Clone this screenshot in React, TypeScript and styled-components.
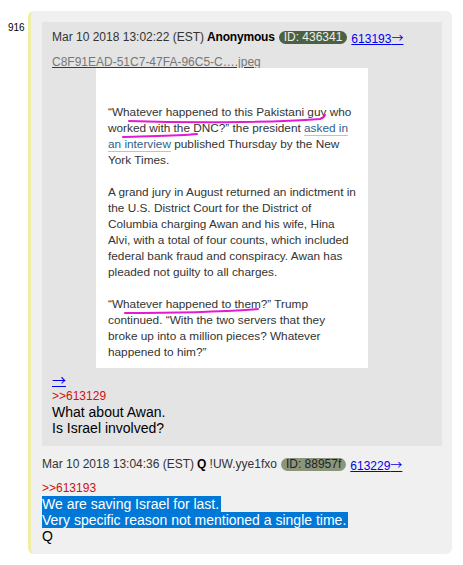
import * as React from 'react';
import styled, { createGlobalStyle } from 'styled-components';

const GlobalStyle = createGlobalStyle`
  body {
    margin: 0;
    background: #fff;
    font-family: "Liberation Sans", Arial, sans-serif;
  }
`;

const Page = styled.div`
  display: flex;
  align-items: flex-start;
  padding: 11px 11px 12px 8px;
`;

const PostNum = styled.div`
  width: 20px;
  font-size: 10px;
  line-height: 12px;
  padding-top: 11px;
  color: #000;
`;

const Card = styled.div`
  width: 424px;
  box-sizing: border-box;
  background: #f0f0f0;
  border-left: 3px solid #efefa4;
  border-radius: 6px;
  padding: 11px 10px 10px 11px;
`;

const QuotedPost = styled.div`
  background: #e4e4e4;
  padding: 6px 10px 10px;
`;

const Header = styled.div`
  display: flex;
  align-items: center;
  gap: 3px;
  height: 18px;
  font-size: 12px;
  color: #333;
  white-space: nowrap;
`;

const Name = styled.b`
  color: #000;
  letter-spacing: -0.2px;
`;

const Badge = styled.span<{ $dark?: boolean }>`
  display: inline-block;
  height: 13px;
  line-height: 13px;
  padding: 0 5px;
  margin: 0 1px;
  border-radius: 7px;
  background: ${(p) => (p.$dark ? '#4b6141' : '#8b957c')};
  color: ${(p) => (p.$dark ? '#eee' : '#222')};
`;

const PostLink = styled.a`
  color: #0000ee;
  text-decoration: underline;
`;

// thin, long arrow like the original board font
const Glyph = styled.span`
  font-family: "Noto Sans CJK JP", "DejaVu Sans", sans-serif;
`;

const FileName = styled.div`
  margin-top: 10px;
  font-size: 12px;
  line-height: 12px;
  color: #777;
  text-decoration: underline;
  text-decoration-color: #2a2ab0;
`;

const Shot = styled.div`
  position: relative;
  width: 272px;
  height: 300px;
  box-sizing: border-box;
  margin-left: 44px;
  padding: 36px 0 0 12px;
  background: #fff;
  font-size: 11.8px;
  line-height: 16px;
  color: #333;
  white-space: nowrap;
`;

const Para = styled.p`
  margin: 0 0 16px;
`;

const ArticleLink = styled.span`
  color: #2f5f8a;
  text-decoration: underline;
  text-decoration-color: #a9c9e2;
  text-underline-offset: 3px;
`;

const Marker = styled.svg`
  position: absolute;
  left: 0;
  top: 0;
`;

const Body = styled.div<{ $gap: number }>`
  margin-top: ${(p) => p.$gap}px;
  font-size: 14px;
  line-height: 16px;
  color: #000;
`;

const Arrow = styled.a`
  display: block;
  width: fit-content;
  color: #0000ee;
  text-decoration: underline;
`;

const QuoteRef = styled.div`
  font-size: 12px;
  color: #cc1111;
`;

const Selected = styled.span`
  background: #0078d7;
  color: #fff;
  padding-right: 2px;
`;

const ReplyPost = styled.div`
  margin-top: 9px;
`;

export default function App() {
  return (
    <Page>
      <GlobalStyle />
      <PostNum>916</PostNum>
      <Card>
        <QuotedPost>
          <Header>
            <span>Mar 10 2018 13:02:22 (EST)</span>
            <Name>Anonymous</Name>
            <Badge $dark>ID: 436341</Badge>
            <PostLink>
              613193<Glyph>→</Glyph>
            </PostLink>
          </Header>
          <FileName>C8F91EAD-51C7-47FA-96C5-C….jpeg</FileName>
          <Shot>
            <Para>
              “Whatever happened to this Pakistani guy who
              <br />
              worked with the DNC?” the president <ArticleLink>asked in</ArticleLink>
              <br />
              <ArticleLink>an interview</ArticleLink> published Thursday by the New
              <br />
              York Times.
            </Para>
            <Para>
              A grand jury in August returned an indictment in
              <br />
              the U.S. District Court for the District of
              <br />
              Columbia charging Awan and his wife, Hina
              <br />
              Alvi, with a total of four counts, which included
              <br />
              federal bank fraud and conspiracy. Awan has
              <br />
              pleaded not guilty to all charges.
            </Para>
            <Para>
              “Whatever happened to them?” Trump
              <br />
              continued. “With the two servers that they
              <br />
              broke up into a million pieces? Whatever
              <br />
              happened to him?”
            </Para>
            <Marker width="272" height="300" viewBox="0 0 272 300">
              <g fill="none" stroke="#e21ad6" strokeWidth="2" strokeLinecap="round">
                <path d="M33 53 C 90 55, 170 55, 224 51 Q 228 50 229 47" />
                <path d="M27 69 C 50 68, 80 68, 101 66" />
                <path d="M29 245 C 70 245, 120 244, 162 241" />
              </g>
            </Marker>
          </Shot>
          <Body $gap={3}>
            <Arrow>
              <Glyph>→</Glyph>
            </Arrow>
            <QuoteRef>&gt;&gt;613129</QuoteRef>
            What about Awan.
            <br />
            Is Israel involved?
          </Body>
        </QuotedPost>
        <ReplyPost>
          <Header>
            <span>Mar 10 2018 13:04:36 (EST)</span>
            <span>
              <Name>Q</Name> !UW.yye1fxo
            </span>
            <Badge>ID: 88957f</Badge>
            <PostLink>
              613229<Glyph>→</Glyph>
            </PostLink>
          </Header>
          <Body $gap={7}>
            <QuoteRef>&gt;&gt;613193</QuoteRef>
            <Selected>We are saving Israel for last.</Selected>
            <br />
            <Selected>Very specific reason not mentioned a single time.</Selected>
            <br />
            Q
          </Body>
        </ReplyPost>
      </Card>
    </Page>
  );
}
